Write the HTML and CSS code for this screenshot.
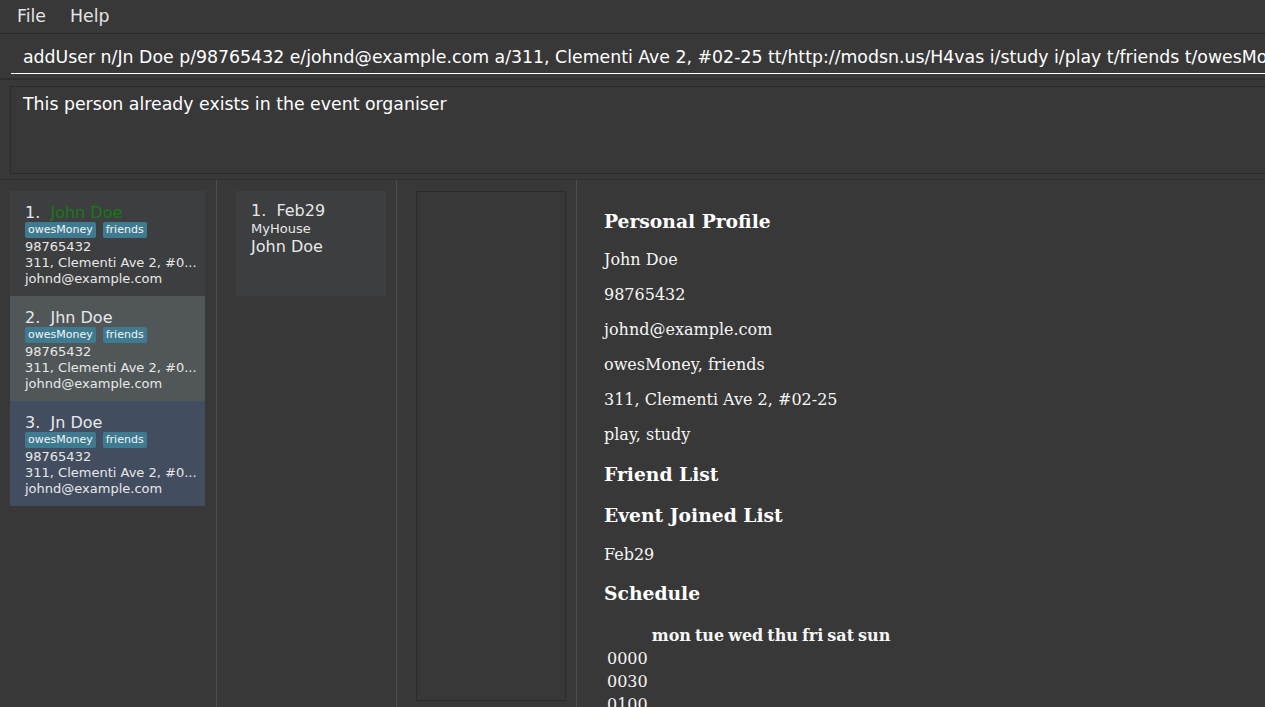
FILE: index.html
```html
<!DOCTYPE html>
<html lang="en">
<head>
    <meta charset="UTF-8">
    <title>Event Organiser</title>
    <link rel="stylesheet" href="styles.css">
</head>
<body>
    <div class="menu-bar">
        <span class="menu-item">File</span>
        <span class="menu-item">Help</span>
    </div>

    <div class="command-box">
        <div class="command-field">addUser n/Jn Doe p/98765432 e/johnd@example.com a/311, Clementi Ave 2, #02-25 tt/http://modsn.us/H4vas i/study i/play t/friends t/owesMoney</div>
    </div>

    <div class="result-pane">
        <div class="result-display">This person already exists in the event organiser</div>
    </div>

    <div class="main">
        <div class="list-panel person-panel">
            <div class="card card-even">
                <div class="big-label">1.  <span class="name-hl">John Doe</span></div>
                <div class="tags"><span class="tag">owesMoney</span><span class="tag">friends</span></div>
                <div class="small-label">98765432</div>
                <div class="small-label">311, Clementi Ave 2, #0...</div>
                <div class="small-label">johnd@example.com</div>
            </div>
            <div class="card card-odd">
                <div class="big-label">2.  Jhn Doe</div>
                <div class="tags"><span class="tag">owesMoney</span><span class="tag">friends</span></div>
                <div class="small-label">98765432</div>
                <div class="small-label">311, Clementi Ave 2, #0...</div>
                <div class="small-label">johnd@example.com</div>
            </div>
            <div class="card card-selected">
                <div class="big-label">3.  Jn Doe</div>
                <div class="tags"><span class="tag">owesMoney</span><span class="tag">friends</span></div>
                <div class="small-label">98765432</div>
                <div class="small-label">311, Clementi Ave 2, #0...</div>
                <div class="small-label">johnd@example.com</div>
            </div>
        </div>

        <div class="list-panel event-panel">
            <div class="card card-even event-card">
                <div class="big-label">1.  Feb29</div>
                <div class="small-label">MyHouse</div>
                <div class="big-label">John Doe</div>
            </div>
        </div>

        <div class="list-panel empty-panel">
            <div class="empty-box"></div>
        </div>

        <div class="details">
            <h3>Personal Profile</h3>
            <p>John Doe</p>
            <p>98765432</p>
            <p>johnd@example.com</p>
            <p>owesMoney, friends</p>
            <p>311, Clementi Ave 2, #02-25</p>
            <p>play, study</p>
            <h3>Friend List</h3>
            <h3>Event Joined List</h3>
            <p>Feb29</p>
            <h3>Schedule</h3>
            <table class="schedule">
                <tr><th></th><th>mon</th><th>tue</th><th>wed</th><th>thu</th><th>fri</th><th>sat</th><th>sun</th></tr>
                <tr><td>0000</td><td></td><td></td><td></td><td></td><td></td><td></td><td></td></tr>
                <tr><td>0030</td><td></td><td></td><td></td><td></td><td></td><td></td><td></td></tr>
                <tr><td>0100</td><td></td><td></td><td></td><td></td><td></td><td></td><td></td></tr>
                <tr><td>0130</td><td></td><td></td><td></td><td></td><td></td><td></td><td></td></tr>
            </table>
        </div>
    </div>
</body>
</html>
```

FILE: styles.css
```css
html, body {
    height: 100%;
}
body {
    margin: 0;
    background-color: #383838;
    font-family: "DejaVu Sans", sans-serif;
    color: #e8e8e8;
    display: flex;
    flex-direction: column;
    overflow: hidden;
}
.menu-bar {
    display: flex;
    height: 33px;
    line-height: 33px;
    padding-left: 5px;
    font-size: 17.33px;
    color: #e4e4e4;
    border-bottom: 1px solid #2b2b2b;
    flex-shrink: 0;
}
.menu-item {
    padding: 0 12px;
}
.command-box {
    padding: 7px 0 4px 11px;
    border-bottom: 2px solid #2e2e2e;
    flex-shrink: 0;
    overflow: hidden;
}
.command-field {
    height: 32px;
    line-height: 32px;
    padding-left: 12px;
    font-size: 17.33px;
    color: #ffffff;
    white-space: nowrap;
    overflow: hidden;
    border-bottom: 1px solid #ffffff;
}
.result-pane {
    padding: 6px 0 5px 10px;
    border-bottom: 1px solid #2e2e2e;
    flex-shrink: 0;
    overflow: hidden;
}
.result-display {
    height: 88px;
    box-sizing: border-box;
    margin-right: -20px;
    padding: 7px 12px;
    border: 1px solid #2b2b2b;
    font-size: 17.33px;
    line-height: 20px;
    color: #ffffff;
}
.main {
    flex: 1;
    display: flex;
    min-height: 0;
}
.list-panel {
    box-sizing: border-box;
    border-right: 1px solid #4e4e4e;
    padding-top: 11px;
    flex-shrink: 0;
}
.person-panel {
    width: 217px;
    padding-left: 10px;
    padding-right: 11px;
}
.event-panel {
    width: 180px;
    padding-left: 19px;
}
.empty-panel {
    width: 180px;
    padding-left: 19px;
    padding-bottom: 6px;
    display: flex;
}
.empty-box {
    width: 150px;
    box-sizing: border-box;
    border: 1px solid #2b2b2b;
}
.card {
    height: 105px;
    box-sizing: border-box;
    padding: 12px 0 0 15px;
    overflow: hidden;
}
.card-even {
    background-color: #3c3e3f;
}
.card-odd {
    background-color: #515658;
}
.card-selected {
    background-color: #424d5f;
}
.event-card {
    width: 150px;
    padding-top: 10px;
}
.event-card .small-label {
    margin-top: 1px;
}
.big-label {
    font-size: 16px;
    line-height: 19px;
    white-space: pre;
}
.name-hl {
    color: #177a17;
}
.small-label {
    font-size: 13px;
    line-height: 16px;
    white-space: nowrap;
}
.tags {
    display: flex;
    align-items: flex-start;
    gap: 7px;
    height: 17px;
}
.tag {
    background-color: #3e7b91;
    color: #f4f4f4;
    font-size: 11px;
    line-height: 12px;
    padding: 2px 3px;
    border-radius: 2px;
}
.details {
    flex: 1;
    padding: 11px 0 0 27px;
    font-family: "DejaVu Serif", serif;
    color: #f6f6f6;
    overflow: hidden;
}
.details h3 {
    font-size: 18.72px;
    line-height: 22px;
    margin: 18.72px 0;
    color: #ffffff;
}
.details p {
    font-size: 16px;
    line-height: 19px;
    margin: 16px 0;
}
.schedule {
    font-size: 16px;
    line-height: 19px;
}
.schedule th, .schedule td {
    padding: 1px;
}
```
